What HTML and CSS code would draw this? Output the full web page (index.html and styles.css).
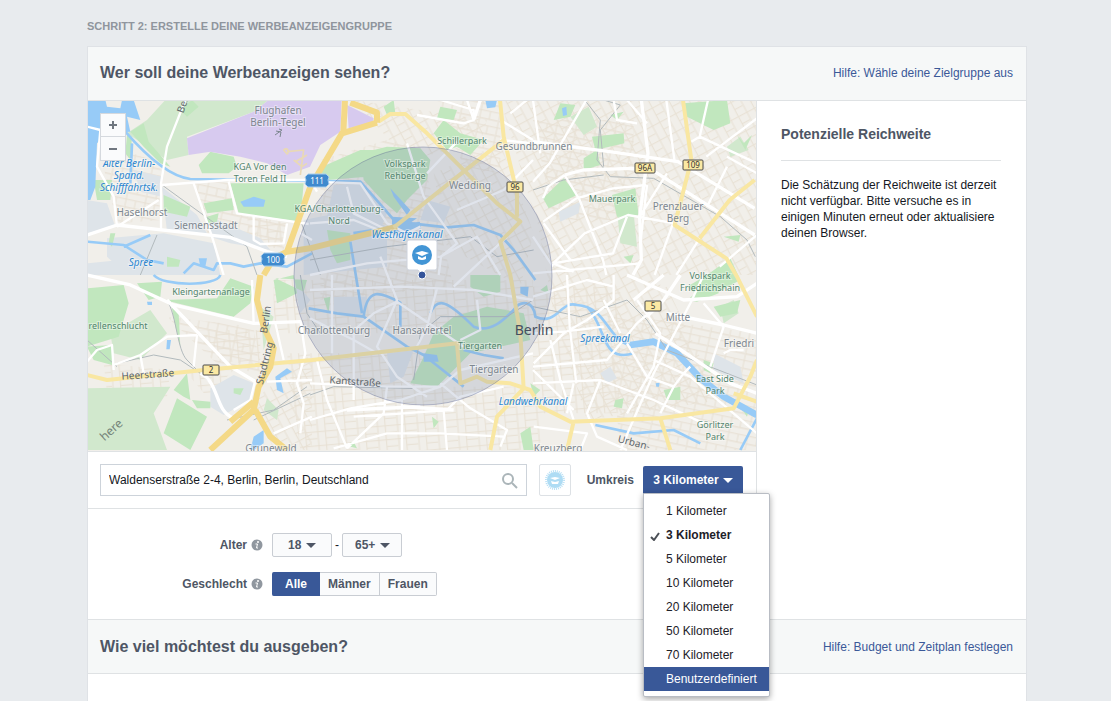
FILE: index.html
```html
<!DOCTYPE html>
<html lang="de">
<head>
<meta charset="utf-8">
<meta name="viewport" content="width=device-width, initial-scale=1">
<title>Werbeanzeigengruppe erstellen</title>
<link rel="stylesheet" href="styles.css">
</head>
<body>
<main class="page">
  <h1 class="step">SCHRITT 2: ERSTELLE DEINE WERBEANZEIGENGRUPPE</h1>
  <div class="panel">
    <header class="section-head">
      <h2>Wer soll deine Werbeanzeigen sehen?</h2>
      <a href="#">Hilfe: Wähle deine Zielgruppe aus</a>
    </header>
    <div class="audience">
      <div class="audience-main">
        <div class="map">
          <svg class="map-art" viewBox="0 0 668 350" role="img" aria-label="Karte von Berlin">
            <defs>
              <pattern id="streets-a" width="58" height="44" patternUnits="userSpaceOnUse" patternTransform="rotate(12)">
                <path class="minor" d="M0 2H58M3 0V44M32 2V26M3 26H58"/>
              </pattern>
              <pattern id="streets-b" width="54" height="48" patternUnits="userSpaceOnUse" patternTransform="rotate(-28)">
                <path class="minor" d="M0 2H54M3 0V48M28 2V48M28 26H54"/>
              </pattern>
              <pattern id="streets-c" width="60" height="42" patternUnits="userSpaceOnUse" patternTransform="rotate(-5)">
                <path class="minor" d="M0 2H60M3 0V42M26 0V42M26 22H60"/>
              </pattern>
            </defs>
            <g class="geo" transform="translate(-1 -1) scale(.33333)">
              <rect class="land" width="2013" height="1056"/>
              <!-- minor street blocks -->
              <g>
                <path fill="url(#streets-a)" d="M30 120L220 190 225 360 90 370ZM320 240L430 250 450 340 600 370 590 450 360 400ZM1050 0H1240V220L1130 200ZM700 180L900 120 1000 140 1100 560 700 600ZM1338 60H1640V360H1400ZM240 650L500 680 520 820 400 800ZM1560 640L2010 700V1050H1600Z"/>
                <path fill="url(#streets-b)" d="M1240 0H1700V250L1338 330ZM1640 0H2010V525H1640ZM1340 300H1720V640H1400ZM1040 220L1240 130 1340 400 1300 560 1080 440ZM800 0L1200 60 1180 130 960 180ZM500 900L675 760V1050H560ZM1400 640L1740 560 1900 900 1500 960Z"/>
                <path fill="url(#streets-c)" d="M50 790L250 810 240 890 60 880ZM330 690H520V800L400 780ZM560 540H1338V700H560ZM600 760H1000L1100 1050H640ZM980 860H1360V1050H1000ZM1338 560H1600V940H1338ZM300 820L450 800 360 890ZM480 345L600 370 590 440H490Z"/>
              </g>
              <!-- industrial -->
              <path class="industry" d="M0 300L60 310 85 380 0 400ZM225 260L330 345 360 400 240 395ZM140 210L225 230 225 290 160 275ZM370 350L520 415 550 450 430 430 370 410ZM60 415L230 400 380 430 400 525H120L60 470ZM0 490L100 480 130 525H0ZM370 865L440 825 500 850 490 900 410 945 370 920ZM650 360L800 330 900 380 900 500 650 525ZM740 255L820 250 900 340 880 390 720 350ZM740 590L840 590 830 650 740 640ZM1020 300L1090 320 1070 370 1000 360ZM1415 335L1480 305 1475 340 1420 365ZM1880 760L1960 800 1970 850 1880 810ZM1540 820L1570 800 1590 835 1560 850ZM620 540L670 600 640 640ZM900 760L980 750 950 830 910 850Z"/>
              <!-- woods and parks -->
              <path class="wood" d="M120 100L180 60 235 0H545L500 35 300 110 305 165 240 180ZM0 865L250 860 200 940 240 1050H0ZM70 700L190 630 240 700 160 780 80 760ZM1450 50L1505 20 1530 80 1490 105ZM1590 330L1640 340 1650 440 1600 430ZM1900 620L1940 600 1955 640 1910 670ZM1920 140L1960 110 1985 150 1930 170ZM520 620L560 650 530 750ZM540 895L575 930 570 960 530 930Z"/>
              <path class="park" d="M335 195L370 155 440 170 450 200 425 220 345 220ZM430 250L650 250 640 365 455 340ZM230 285L310 320 300 350 230 335ZM350 310L435 295 440 330 360 340ZM360 350L395 340 390 365 360 370ZM130 95L170 70 185 125 250 200 220 190 170 140ZM20 240L75 240 70 300 30 300ZM120 105L135 110 130 180 115 160ZM70 400L85 400 75 440 65 430ZM240 470L280 480 275 500 240 500ZM280 30L315 0 335 20 300 50ZM695 205L820 150 900 150 840 230 720 240ZM820 160L900 140 1000 145 1030 180 1020 240 960 300 930 340 885 300 830 240ZM720 390L790 400 790 480 750 490 730 450ZM1040 100L1070 60 1120 100 1190 120 1150 165 1110 140 1080 150ZM890 20L920 0 925 40 900 45ZM1060 20L1110 30 1100 60 1050 55ZM1788 10L1920 0 1930 70 1880 90 1800 50ZM1368 295L1430 235 1470 285 1385 325ZM1515 110L1610 100 1612 130 1525 150ZM1575 285L1645 265 1655 345 1590 350ZM1490 175L1530 150 1540 195 1490 210ZM1950 105L1970 130 1995 105 1975 150ZM1860 525L1930 475 1960 540 1850 600 1800 560ZM1420 10L1465 15 1450 50 1400 60ZM1570 45L1610 35 1590 60ZM1910 410L1960 405 1955 425ZM1610 470L1640 465 1630 490ZM0 565L110 555 125 610 95 710 0 740ZM150 550L225 545 220 590 185 600ZM0 740L75 735 75 795 20 780ZM235 600L390 595 430 535 500 560 490 610 440 650 270 610ZM300 820L310 900 290 890 260 870ZM270 895L360 950 310 1050 230 1000ZM315 900L370 905 370 925 330 925ZM250 600L275 640 280 740 265 680ZM560 540L620 525 630 580 570 610ZM565 535L650 575 660 540ZM440 865L470 865 460 885 440 880ZM970 850L1010 770 1040 700 1100 650 1200 620 1310 640 1330 720 1150 760 1050 860ZM1150 525H1240V575L1190 590 1150 560ZM710 595L730 590 725 640ZM840 550L860 590 850 570ZM770 1035L800 1025 810 1045ZM1035 950L1055 965 1040 985ZM1330 850L1360 870 1340 890ZM1300 1000L1330 980 1340 1050H1310ZM1730 870L1780 860 1780 900 1740 900ZM1585 900L1610 895 1605 925 1580 920ZM1850 780L1880 790 1870 820 1850 810ZM1800 600L1890 530 1895 580 1830 605ZM1880 620L1960 600 1950 640 1900 650ZM1360 570L1380 555 1385 580ZM1960 920L1985 930 1980 950Z"/>
              <path class="airport" d="M300 115L500 35 545 0H764L760 95 700 135 669 200 600 225 540 190 460 170 370 155 305 165ZM780 15L860 55 855 70 785 85Z"/>
              <path class="taxiway" d="M600 155L650 150 640 225M590 150C600 140 610 155 600 162ZM625 185L660 165M620 180L645 200 660 190"/>
              <!-- water -->
              <path class="water" d="M0 0H55L60 20 100 25 105 0H140L160 60 120 50 130 95 60 100 30 130 25 260 10 300 0 300ZM460 305L500 290 535 300 530 320 470 320ZM1195 0H1230L1225 22 1200 25ZM910 265L970 330 960 345 920 290ZM915 350L990 355 960 375 915 390ZM1425 25L1438 20 1440 45 1428 48ZM335 475L360 475 355 500 340 500ZM240 720L252 720 248 748 238 748ZM180 605L195 605 195 615 182 615ZM565 830L600 805 615 815 580 835 590 880 570 870ZM490 1050L500 1010 530 990 530 1030 500 1050ZM1010 760L1050 765 1055 785 1010 785ZM1300 560L1325 560 1322 590 1300 580ZM1706 850L1718 848 1716 860 1708 860Z"/>
              <path class="canal" d="M115 95C180 170 250 230 310 237L820 245 860 290 925 365 1080 382 1160 375 1240 405 1280 450 1345 540M135 130L130 250M790 425L825 640M0 425L110 435 180 480 230 490M110 440L190 405M290 520L320 490 380 510 390 490 430 490 470 500 520 490 600 500 675 460M200 525C230 560 390 560 400 525M665 625L750 640 830 650C840 560 880 575 940 608L940 680M830 650L960 740 1010 765 1130 860M1030 640C1050 590 1080 600 1160 680 1210 700 1250 660 1280 630C1300 600 1340 600 1345 650 1410 680 1420 600 1470 615C1560 620 1560 720 1630 735L1700 725M1500 620C1560 680 1540 790 1640 760M1740 735L1830 820 1920 900 2010 950M1525 975L1640 1000 1760 990 1840 1030M1130 750L1190 765 1250 775M1960 1050L2010 955"/>
              <path class="river" d="M1630 735L1700 725 1770 760 1840 835 1910 890 2010 945M800 405L1000 375"/>
              <!-- railways -->
              <path class="rail" d="M225 255L480 440 510 525M210 405L160 525M240 600C270 650 270 750 300 780L380 860M0 720L90 800M90 790L200 765 280 780 340 820M640 360L700 525M640 525L660 640 700 700M1493 0L1540 60 1530 180 1570 230 1700 235 1900 350 1980 420 2005 470M1550 0L1600 15 1540 90 1550 200M1338 270L1430 240 1550 225M669 885L740 860 980 865M980 840L1000 700 1060 650 1260 650 1338 600M1338 620L1480 650 1620 600 1680 660 1740 750 2010 855M500 960L670 880M420 960L560 930 660 860M669 480L900 440 1150 410 1230 470 1340 450"/>
              <!-- white roads -->
              <path class="road" d="M0 80L40 90 30 200 80 290 90 380M295 0L240 140 222 250 222 390M225 255L420 240 665 240M425 245L450 340 665 372M320 250L375 410 410 525M90 380L215 300M500 350L500 420 520 432 590 430 600 370M670 240L690 275M640 400L675 420M0 785L30 750 75 735 80 810M80 795L160 765 240 710 330 705M160 765L170 820M330 705L320 800M495 540L500 670M565 670L590 780M640 660L655 760 630 850 650 910 640 1000M540 845L675 840M505 840L490 900 440 930"/>
              <path class="road" d="M670 245L820 250 900 370 960 400 1000 380M780 260L800 340 900 390M669 370L800 360 925 410 1010 400M960 130L1010 290 1110 430 1062 470 1055 525M1110 330L1180 300 1250 270 1338 180M1020 220L1110 125M669 525L840 490 1060 470 1170 410 1240 525M1100 560L1260 410M1060 0L1160 30 1160 60 1130 70 990 45M1140 0L1160 60M1270 40L1320 0M1240 120L1338 130M1240 60L1338 120M880 470L930 600 870 740 930 830 1020 890M669 570L940 560 1060 565 1160 570 1338 600M669 655L800 720 870 760M735 525L735 760M930 605L1100 720 1130 740M800 700L800 900M930 605L860 640 790 700M1050 565L1020 680 990 740M1170 600L1180 690 1120 720M669 850L900 860 1060 860 1120 810 1338 760M690 780L720 900 780 1045M669 960L790 925 940 900 1060 860M900 860L890 940 780 1045M945 900V1050M800 950L950 940 1080 930 1120 890 1250 860M1070 930L1080 1050M1060 850L1150 925 1260 990 1240 1040M740 1045L900 1000 1060 1000 1250 1010M560 1000L675 950"/>
              <path class="road" d="M1338 245L1388 190 1498 0M1738 0L1763 185M1338 0L1360 160M1368 365L1468 295 1578 265 1678 255M1398 490L1493 400 1623 345 1763 370M1433 225L1478 300 1548 480 1558 525M1368 295L1383 260 1433 225M1863 0L1838 110 2010 190M1813 125L1838 110M1858 170L2010 55M1920 170L2010 220M1920 200L1860 320M1758 370L1703 525M1838 415L1768 525M2010 405L1898 500M1398 490L1578 460 1620 350M1398 490L1460 515M1580 0L1590 60 1650 70M1680 255L1660 430M1620 0L1680 70M1370 370L1450 480M1338 410L1398 500M1660 490L1338 520M1658 350L1740 220M1440 525L1448 680 1468 850M1338 590L1500 540 1580 560M1580 525L1580 600 1500 660 1430 700 1340 790M1338 800L1560 780 1650 670 1730 600M1850 525L1810 610 1700 820 1600 1050M1650 600L1720 700 1700 800 1620 940M1338 700L1430 695 1550 680M1620 730L1680 830 1760 860 1790 820 1810 800M1700 780L1810 830 2010 1000M1338 850L1540 840 1700 900 1850 970M1390 720L1420 840 1460 960M1460 850L1440 940M1540 840L1500 940 1530 1010 1620 1050M1760 860L1720 940M1910 680L1870 800M1850 610L1910 680M1970 750L1930 750 1910 760M1480 1050L1500 1000 1340 980M1338 810L1460 930M1550 600L1600 700"/>
              <path class="road road-main" d="M0 405L90 375 430 412 540 455 600 470M0 525L130 555 260 615 500 670 640 665M240 600L430 800 505 845M340 820C400 850 380 930 440 955M1338 125L1568 155 1773 185 2003 325M1663 0L1683 160 1658 350 1663 480 1638 525M1433 225L1488 210 1638 205 1703 215 2003 405M1180 0L1160 60M1620 525L1790 600 1950 590 2010 550M1730 525L1640 600M1740 640L1910 675 2010 700M1705 700L1760 735 1930 850 2010 880M945 920L1100 930M1000 920L780 930M1780 525L1730 600 1680 650"/>
              <!-- highways -->
              <path class="trunk" d="M0 825L60 840 350 810 675 780 1110 730 1120 850 1170 830 1200 845 1270 850 1330 870 1360 920 1450 965 1720 955 1940 925 1990 830 2010 780M875 65L910 42 955 42 1020 100 1120 200 1230 310 1300 365 1240 425 1270 525 1300 700 1310 865 1230 950 1210 1050M1239 0L1250 110 1290 280 1290 350M1788 0L1813 180 1763 375 1918 475 1950 530 2010 650M2003 240L1928 300 1838 415M1720 955L1750 1050M1460 965L1440 1050M1940 880L2010 905"/>
              <path class="highway" d="M520 525L510 600 530 680 560 745 550 800 515 860 500 930 370 1050M505 930L550 1010 600 1050M500 905L430 965M669 970"/>
              <path class="highway" d="M530 525L560 475 600 455 669 445 810 410 930 380M600 455L670 260 765 100 870 68M774 0L769 95M790 8L870 38 870 68"/>
              <path class="trunk" d="M920 383L1130 215 1250 120"/>
            </g>
            <circle class="radius" cx="335" cy="175" r="129"/>
            <!-- road shields -->
            <g class="shield-blue">
              <path d="M220 73H238L241 76 240 79 241 83 238 86H220L217 83 218 79 217 76Z"/><text x="229" y="83">111</text>
              <path d="M176 152H194L197 155 196 158 197 162 194 165H176L173 162 174 158 173 155Z"/><text x="185" y="162">100</text>
            </g>
            <g class="shield">
              <rect x="419" y="81" width="16" height="10"/><text x="427" y="89">96</text>
              <rect x="547" y="62" width="20" height="10"/><text x="557" y="70">96A</text>
              <rect x="595" y="59" width="20" height="10"/><text x="605" y="67">109</text>
              <rect x="557" y="200" width="16" height="10"/><text x="565" y="208">5</text>
              <rect x="115" y="264" width="16" height="10"/><text x="123" y="272">2</text>
            </g>
            <g class="place">
              <text x="190" y="13">Flughafen</text><text x="190" y="25">Berlin-Tegel</text>
              <text x="54" y="115">Haselhorst</text><text x="118" y="128">Siemensstadt</text>
              <text x="446" y="49">Gesundbrunnen</text><text x="382" y="88">Wedding</text>
              <text x="590" y="109">Prenzlauer</text><text x="590" y="121">Berg</text>
              <text x="590" y="220">Mitte</text><text x="651" y="246">Friedri</text>
              <text x="246" y="233">Charlottenburg</text><text x="334" y="233">Hansaviertel</text>
              <text x="406" y="272">Tiergarten</text><text x="183" y="351">Grunewald</text><text x="470" y="351">Kreuzberg</text>
            </g>
            <text class="city" x="446" y="234">Berlin</text>
            <g class="green-name">
              <text x="172" y="69">KGA Vor den</text><text x="172" y="81">Toren Feld II</text>
              <text x="374" y="43">Schillerpark</text><text x="317" y="66">Volkspark</text><text x="317" y="78">Rehberge</text>
              <text x="251" y="111">KGA/Charlottenburg-</text><text x="251" y="123">Nord</text>
              <text x="524" y="101">Mauerpark</text><text x="622" y="178">Volkspark</text><text x="622" y="190">Friedrichshain</text>
              <text x="123" y="194">Kleingartenanlage</text><text x="30" y="228">rellenschlucht</text>
              <text x="392" y="248">Tiergarten</text><text x="627" y="281">East Side</text><text x="627" y="293">Park</text>
              <text x="627" y="327">Görlitzer</text><text x="627" y="339">Park</text>
            </g>
            <g class="water-name">
              <text x="41" y="66">Alter Berlin-</text><text x="41" y="78">Spand.</text><text x="41" y="90">Schifffahrtsk.</text>
              <text x="53" y="165">Spree</text><text x="319" y="137">Westhafenkanal</text>
              <text x="517" y="241">Spreekanal</text><text x="445" y="304">Landwehrkanal</text>
            </g>
            <g class="street-name">
              <text transform="translate(60 277) rotate(-4)">Heerstraße</text>
              <text transform="translate(267 284) rotate(4)">Kantstraße</text>
              <text transform="translate(181 219) rotate(-82)">Berlin</text>
              <text transform="translate(180 263) rotate(-76)">Stadtring</text>
              <text transform="translate(98 5) rotate(-70)">Ber</text>
              <text transform="translate(545 345) rotate(14)">Urban-</text>
            </g>
            <text class="here" transform="translate(26 332) rotate(-42)">here</text>
            <path class="plane" d="M187 34L194 29M188 30L193 31 192 36M194 29L191 28"/>
            <!-- location pin -->
            <g class="pin">
              <path class="pin-card" d="M321 139H347Q349 139 349 141V167Q349 169 347 169H338L334 173 330 169H321Q319 169 319 167V141Q319 139 321 139Z"/>
              <circle class="pin-disc" cx="334" cy="154" r="10"/>
              <path class="pin-cap" d="M327 152L334 150 341 152 334 155ZM330 155L334 157 338 155V158Q334 160 330 158Z"/>
              <circle class="pin-dot" cx="334" cy="174" r="4"/>
            </g>
          </svg>
          <div class="zoom">
            <button type="button" aria-label="Vergrößern"><svg viewBox="0 0 10 10"><path d="M1 5H9M5 1V9"/></svg></button>
            <button type="button" aria-label="Verkleinern"><svg viewBox="0 0 10 10"><path d="M1 5H9"/></svg></button>
          </div>
        </div>
        <div class="search-row">
          <div class="search">
            <input type="text" aria-label="Adresse" value="Waldenserstraße 2-4, Berlin, Berlin, Deutschland">
            <svg viewBox="0 0 18 18"><circle cx="7" cy="7" r="5"/><path d="M11 11L16 16"/></svg>
          </div>
          <button type="button" class="pin-button" aria-label="Standort">
            <svg viewBox="0 0 22 22"><circle class="halo" cx="11" cy="11" r="9"/><circle class="disc" cx="11" cy="11" r="8"/><path d="M6 9L11 8 16 9 11 11ZM7 12L11 13 15 12 14 15H8Z"/></svg>
          </button>
          <span class="label" id="radius-label">Umkreis</span>
          <div class="dropdown">
            <button type="button" class="radius-button" aria-haspopup="listbox" aria-expanded="true">3 Kilometer <i class="caret"></i></button>
            <ul class="menu" role="listbox" aria-labelledby="radius-label">
              <li role="option">1 Kilometer</li>
              <li role="option" aria-selected="true" class="selected"><svg viewBox="0 0 10 10"><path d="M1 6L4 9 9 2"/></svg>3 Kilometer</li>
              <li role="option">5 Kilometer</li>
              <li role="option">10 Kilometer</li>
              <li role="option">20 Kilometer</li>
              <li role="option">50 Kilometer</li>
              <li role="option">70 Kilometer</li>
              <li role="option" class="active">Benutzerdefiniert</li>
            </ul>
          </div>
        </div>
        <form class="fields">
          <div class="field">
            <label class="label" for="age-from">Alter</label>
            <svg class="info" viewBox="0 0 12 12"><circle cx="6" cy="6" r="5.500"/><path d="M4.500 5H6.500L5.500 9H7"/><circle class="info-dot" cx="7" cy="3" r="1"/></svg>
            <div class="ages">
              <span class="select"><select id="age-from"><option>18</option></select><i class="caret"></i></span>
              <span>-</span>
              <span class="select"><select class="wide" aria-label="Alter bis"><option>65+</option></select><i class="caret"></i></span>
            </div>
          </div>
          <div class="field" role="radiogroup" aria-labelledby="gender-label">
            <span class="label" id="gender-label">Geschlecht</span>
            <svg class="info" viewBox="0 0 12 12"><circle cx="6" cy="6" r="5.500"/><path d="M4.500 5H6.500L5.500 9H7"/><circle class="info-dot" cx="7" cy="3" r="1"/></svg>
            <div class="segments">
              <label><input type="radio" name="gender" checked><span>Alle</span></label>
              <label><input type="radio" name="gender"><span>Männer</span></label>
              <label><input type="radio" name="gender"><span>Frauen</span></label>
            </div>
          </div>
        </form>
      </div>
      <aside class="reach">
        <h3>Potenzielle Reichweite</h3>
        <p>Die Schätzung der Reichweite ist derzeit nicht verfügbar. Bitte versuche es in einigen Minuten erneut oder aktualisiere deinen Browser.</p>
      </aside>
    </div>
    <header class="section-head section-next">
      <h2>Wie viel möchtest du ausgeben?</h2>
      <a href="#">Hilfe: Budget und Zeitplan festlegen</a>
    </header>
  </div>
</main>
</body>
</html>
```
FILE: styles.css
```css
* { box-sizing: border-box; }
html, body { height: 100%; }
body {
  margin: 0;
  overflow: hidden;
  background: #e8ebee;
  color: #141823;
  font: 12px/16px "Liberation Sans", Arial, sans-serif;
}
button, input, select { font: inherit; color: inherit; margin: 0; }
h1, h2, h3, p, ul { margin: 0; padding: 0; }
.page {
  display: flex;
  flex-direction: column;
  min-height: 100%;
  padding: 18px 84px 0 87px;
}
.step { font-size: 11px; line-height: 16px; color: #8f959d; }
.panel {
  flex: 1;
  margin-top: 12px;
  background: #fff;
  border: 1px solid #dfe2e6;
  border-bottom: 0;
}
.section-head {
  display: flex;
  align-items: center;
  justify-content: space-between;
  height: 54px;
  padding: 0 13px 2px 12px;
  background: #f6f8f8;
  border-bottom: 1px solid #dfe2e4;
}
.section-next { height: 55px; padding-bottom: 0; border-top: 1px solid #dfe2e4; }
.section-head h2 { font-size: 16px; line-height: 20px; color: #4e5665; }
.section-head a { color: #3b5998; text-decoration: none; }
.audience { display: flex; }
.audience-main { flex: 1; min-width: 0; }
.reach { width: 269px; padding: 24px 25px 0 24px; }
.reach h3 {
  padding-bottom: 17px;
  border-bottom: 1px solid #dfe2e4;
  font-size: 14px;
  line-height: 18px;
  color: #4e5665;
}
.reach p { margin-top: 16px; }

.map { position: relative; border-right: 1px solid #dfe2e4; }
.map-art { display: block; width: 100%; height: auto; font-family: "Noto Sans", sans-serif; }
.land { fill: #f1efea; }
.industry { fill: #dee4e9; }
.wood { fill: #d1e8cd; }
.park { fill: #c1e7be; }
.airport { fill: #d7caef; }
.water { fill: #97cbf7; }
.minor { fill: none; stroke: #e7e0d3; stroke-width: 3; }
.taxiway, .canal, .river, .rail, .road, .trunk, .highway { fill: none; stroke-linejoin: round; }
.taxiway { stroke: #e9d9b5; stroke-width: 5; }
.canal { stroke: #97cbf7; stroke-width: 8; }
.river { stroke: #97cbf7; stroke-width: 20; }
.rail { stroke: #b2babd; stroke-width: 3; }
.road { stroke: #fff; stroke-width: 7; }
.road-main { stroke-width: 10; }
.trunk { stroke: #f9e7a2; stroke-width: 12; }
.highway { stroke: #f4d987; stroke-width: 18; }
.radius { fill: rgba(112, 130, 170, .22); stroke: rgba(92, 103, 148, .4); }
.place, .green-name, .water-name { font-size: 10px; text-anchor: middle; paint-order: stroke; stroke: rgba(255, 255, 255, .4); stroke-width: 2px; }
.place { fill: #7d8790; }
.green-name { font-size: 9px; fill: #53856e; }
.water-name { font-style: italic; fill: #2c86d0; }
.city { font-size: 14px; text-anchor: middle; fill: #454e60; }
.street-name { font-size: 10px; text-anchor: middle; fill: #5d666c; }
.here { font-size: 12px; text-anchor: middle; fill: #74847a; }
.plane { fill: none; stroke: #7d8790; }
.shield-blue, .shield { font-size: 8px; text-anchor: middle; }
.shield-blue path { fill: #3f8ace; stroke: #a7ccec; }
.shield-blue text { fill: #fff; }
.shield rect { fill: #fbe9a3; stroke: #4b4b4b; rx: 1px; }
.shield text { fill: #333; }
.pin-card { fill: #fff; stroke: #cdd2dc; }
.pin-disc { fill: #4295d5; }
.pin-cap { fill: #fff; }
.pin-dot { fill: #34549a; stroke: #fff; }
.zoom { position: absolute; top: 12px; left: 12px; display: grid; width: 26px; }
.zoom button {
  display: grid;
  place-items: center;
  height: 24px;
  padding: 0;
  background: #fafbfc;
  border: 1px solid #d5d9de;
}
.zoom button + button { border-top: 0; }
.zoom svg { width: 10px; fill: none; stroke: #707780; stroke-width: 2; }

.search-row {
  display: flex;
  align-items: center;
  height: 58px;
  padding: 0 13px 0 12px;
  border: solid #dfe2e4;
  border-width: 1px 1px 1px 0;
}
.search { position: relative; flex: 1; }
.search input {
  display: block;
  width: 100%;
  height: 32px;
  padding: 0 36px 0 8px;
  border: 1px solid #cdd3da;
  border-radius: 0;
  background: #fff;
}
.search svg { position: absolute; top: 8px; right: 8px; width: 18px; fill: none; stroke: #abb5b9; stroke-width: 2; }
.pin-button {
  display: grid;
  place-items: center;
  width: 32px;
  height: 32px;
  margin: 0 16px 0 12px;
  padding: 0;
  background: #fff;
  border: 1px solid #dde1e5;
  border-radius: 2px;
}
.pin-button svg { width: 22px; fill: #fff; }
.halo { fill: none; stroke: #b9e0f5; stroke-width: 2; stroke-dasharray: 1 1; }
.disc { fill: #aedcf4; }
.label { font-weight: bold; color: #4e5665; }
.dropdown { position: relative; margin-left: 9px; }
.radius-button {
  display: flex;
  align-items: center;
  justify-content: center;
  gap: 4px;
  width: 100px;
  height: 28px;
  padding: 0;
  background: #395898;
  border: 0;
  border-radius: 2px 2px 0 0;
  color: #fff;
  font-weight: bold;
}
.caret { border: 5px solid transparent; border-top-color: currentColor; border-bottom: 0; }
.menu {
  position: absolute;
  z-index: 2;
  top: 27px;
  left: 0;
  width: 127px;
  padding: 5px 0;
  background: #fff;
  border: 1px solid #b9bdc4;
  border-radius: 0 2px 2px 2px;
  box-shadow: 0 2px 6px rgba(0, 0, 0, .35);
  list-style: none;
  color: #1d2129;
}
.menu li { position: relative; padding: 4px 0 4px 22px; line-height: 16px; white-space: nowrap; }
.menu .selected { font-weight: bold; }
.menu .active { background: #395898; color: #fff; }
.menu svg { position: absolute; top: 8px; left: 6px; width: 10px; fill: none; stroke: #4b4f56; stroke-width: 2; }

.fields { display: grid; gap: 15px; padding: 24px 0 23px; }
.field { display: grid; grid-template-columns: 159px 12px auto; align-items: center; column-gap: 4px; }
.field .label { text-align: right; }
.info { width: 12px; fill: #90979f; }
.info path { fill: none; stroke: #fff; stroke-width: 1; }
.info .info-dot { fill: #fff; }
.ages, .segments { display: flex; align-items: center; margin-left: 5px; }
.ages { gap: 3px; }
.select { position: relative; width: 60px; color: #4e5665; }
.select select {
  display: block;
  width: 100%;
  height: 24px;
  padding: 0 0 0 15px;
  appearance: none;
  background: #fafbfc;
  border: 1px solid #c9cdd3;
  border-radius: 2px;
  font-weight: bold;
}
.select .wide { padding-left: 12px; }
.select .caret { position: absolute; top: 10px; right: 16px; pointer-events: none; }
.select .wide + .caret { right: 12px; }
.segments label { position: relative; }
.segments input { position: absolute; opacity: 0; }
.segments span {
  display: block;
  height: 24px;
  padding: 3px 8px;
  background: #fafbfc;
  border: 1px solid #c9cdd3;
  border-left: 0;
  color: #4e5665;
  font-weight: bold;
}
.segments label:first-child span { padding: 3px 12px 3px 13px; }
.segments label:last-child span { border-radius: 0 2px 2px 0; }
.segments input:checked + span { background: #395898; border-color: #395898; color: #fff; border-radius: 2px 0 0 2px; }
```
